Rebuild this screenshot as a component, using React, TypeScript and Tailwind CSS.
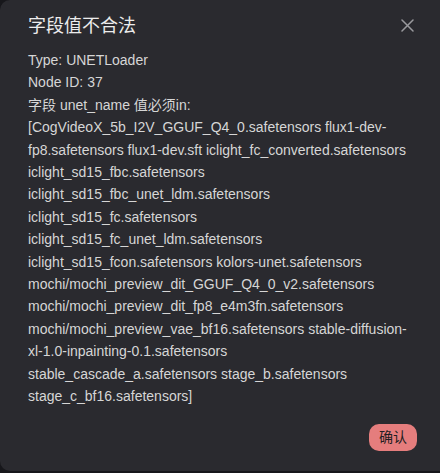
import React from "react";

const lines = [
  "Type: UNETLoader",
  "Node ID: 37",
  "字段 unet_name 值必须in:",
  "[CogVideoX_5b_I2V_GGUF_Q4_0.safetensors flux1-dev-",
  "fp8.safetensors flux1-dev.sft iclight_fc_converted.safetensors",
  "iclight_sd15_fbc.safetensors",
  "iclight_sd15_fbc_unet_ldm.safetensors",
  "iclight_sd15_fc.safetensors",
  "iclight_sd15_fc_unet_ldm.safetensors",
  "iclight_sd15_fcon.safetensors kolors-unet.safetensors",
  "mochi/mochi_preview_dit_GGUF_Q4_0_v2.safetensors",
  "mochi/mochi_preview_dit_fp8_e4m3fn.safetensors",
  "mochi/mochi_preview_vae_bf16.safetensors stable-diffusion-",
  "xl-1.0-inpainting-0.1.safetensors",
  "stable_cascade_a.safetensors stage_b.safetensors",
  "stage_c_bf16.safetensors]",
];

export default function App() {
  return (
    <div
      className="w-[440px] h-[473px] overflow-hidden bg-[#17171b] flex flex-col"
      style={{ fontFamily: '"Liberation Sans", Arial, "Noto Sans CJK SC", sans-serif' }}
    >
      <div className="w-[452px] h-[471px] shrink-0 bg-[#2a2a2f] rounded-[10px] flex flex-col pl-[28px] pt-[12px]">
        <div className="flex items-start justify-between w-[412px]">
          <div className="text-[18px] leading-[26px] text-[#ececec] mt-[1px]">字段值不合法</div>
          <svg width="13" height="13" viewBox="0 0 13 13" className="mt-[7px] mr-[26px]">
            <path d="M1 1 L12 12 M12 1 L1 12" stroke="#9a9a9e" strokeWidth="1.5" strokeLinecap="round" />
          </svg>
        </div>
        <div className="mt-[10px] text-[14px] leading-[22.4px] text-[#d6d6d6] w-[390px]">
          {lines.map((l, i) => (
            <div key={i} className="whitespace-nowrap">{l}</div>
          ))}
        </div>
        <div className="flex justify-end w-[389px] mt-[16px]">
          <button className="bg-[#e57d7d] text-[#1e1e22] text-[14px] rounded-[10px] w-[48px] h-[27px] flex items-center justify-center">
            确认
          </button>
        </div>
      </div>
    </div>
  );
}
